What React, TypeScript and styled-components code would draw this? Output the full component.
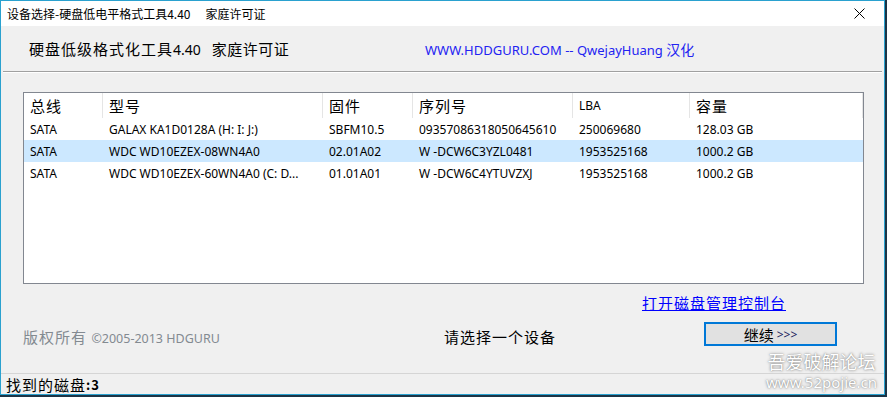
import styled, { createGlobalStyle } from 'styled-components';

const GlobalStyle = createGlobalStyle`
  html, body {
    margin: 0;
    padding: 0;
  }
  body {
    width: 887px;
    height: 397px;
    overflow: hidden;
    background: #1c3446;
    font-family: 'Noto Sans', 'Noto Sans CJK SC', sans-serif;
  }
`;

const cjk = `'Noto Sans CJK SC', 'Noto Sans', sans-serif`;

type Column = { title: string; width: number; latin?: boolean };

const columns: Column[] = [
  { title: '总线', width: 79 },
  { title: '型号', width: 220 },
  { title: '固件', width: 90 },
  { title: '序列号', width: 160 },
  { title: 'LBA', width: 117, latin: true },
  { title: '容量', width: 173 },
];

const drives = [
  ['SATA', 'GALAX KA1D0128A (H: I: J:)', 'SBFM10.5', '09357086318050645610', '250069680', '128.03 GB'],
  ['SATA', 'WDC WD10EZEX-08WN4A0', '02.01A02', 'W -DCW6C3YZL0481', '1953525168', '1000.2 GB'],
  ['SATA', 'WDC WD10EZEX-60WN4A0 (C: D...', '01.01A01', 'W -DCW6C4YTUVZXJ', '1953525168', '1000.2 GB'],
];

const gridCols = columns.map((c) => `${c.width}px`).join(' ');

export default function App() {
  return (
    <>
      <GlobalStyle />
      <Window>
        <TitleBar>
          <TitleText>
            设备选择-硬盘低电平格式工具4.40<TitleGap>家庭许可证</TitleGap>
          </TitleText>
          <CloseButton>
            <svg width="11" height="11" viewBox="0 0 11 11">
              <path d="M0.5 0.5 L10.5 10.5 M10.5 0.5 L0.5 10.5" stroke="#000" strokeWidth="1" fill="none" />
            </svg>
          </CloseButton>
        </TitleBar>

        <Client>
          <Header>
            <AppTitle>
              硬盘低级格式化工具<Version>4.40</Version>
              <License>家庭许可证</License>
            </AppTitle>
            <Credits>
              WWW.HDDGURU.COM -- QwejayHuang <CreditsCjk>汉化</CreditsCjk>
            </Credits>
          </Header>
          <Divider />

          <ListBox>
            <ListHeader>
              {columns.map((c) => (
                <HeaderCell key={c.title} $latin={c.latin}>
                  {c.title}
                </HeaderCell>
              ))}
            </ListHeader>
            {drives.map((d, i) => (
              <ListRow key={i} $selected={i === 1}>
                {d.map((v, j) => (
                  <Cell key={j}>{v}</Cell>
                ))}
              </ListRow>
            ))}
          </ListBox>

          <LinkRow>
            <DiskLink>打开磁盘管理控制台</DiskLink>
          </LinkRow>

          <ActionRow>
            <Copyright>
              版权所有 <CopyrightLatin>©2005-2013 HDGURU</CopyrightLatin>
            </Copyright>
            <Prompt>请选择一个设备</Prompt>
            <ContinueButton>
              继续 <Arrows>&gt;&gt;&gt;</Arrows>
            </ContinueButton>
          </ActionRow>

          <StatusBar>
            找到的磁盘<StatusCount>:3</StatusCount>
          </StatusBar>
        </Client>

        <Watermark>
          <WatermarkCn>吾爱破解论坛</WatermarkCn>
          <WatermarkUrl>www.52pojie.cn</WatermarkUrl>
        </Watermark>
      </Window>
    </>
  );
}

const Window = styled.div`
  position: relative;
  box-sizing: border-box;
  width: 885px;
  height: 395px;
  border: 1px solid #2aa1cf;
  display: flex;
  flex-direction: column;
  background: #f0f0f0;
`;

const TitleBar = styled.div`
  height: 25px;
  background: #ffffff;
  display: flex;
  align-items: center;
  padding-left: 6px;
`;

const TitleText = styled.div`
  font-family: ${cjk};
  font-size: 12px;
  color: #000;
  white-space: nowrap;
  flex: 1;
`;

const TitleGap = styled.span`
  margin-left: 15px;
`;

const CloseButton = styled.div`
  width: 46px;
  height: 25px;
  display: flex;
  align-items: center;
  justify-content: center;
  margin-right: 2px;
`;

const Client = styled.div`
  flex: 1;
  display: flex;
  flex-direction: column;
  background: #f0f0f0;
`;

const Header = styled.div`
  height: 45px;
  display: flex;
  align-items: center;
  padding-left: 28px;
`;

const AppTitle = styled.div`
  width: 396px;
  font-family: ${cjk};
  font-size: 15px;
  letter-spacing: 1px;
  color: #000;
  white-space: nowrap;
`;

const Version = styled.span`
  font-family: 'Noto Sans', sans-serif;
  font-size: 14px;
  letter-spacing: 0;
`;

const License = styled.span`
  margin-left: 11px;
  letter-spacing: 0.5px;
`;

const Credits = styled.div`
  font-family: 'Noto Sans', sans-serif;
  font-size: 13px;
  color: #2323f2;
  white-space: nowrap;
`;

const CreditsCjk = styled.span`
  font-family: ${cjk};
  font-size: 14px;
`;

const Divider = styled.div`
  margin: 0 2px;
  border-top: 1px solid #a0a0a0;
  border-bottom: 1px solid #ffffff;
`;

const ListBox = styled.div`
  box-sizing: border-box;
  margin: 19px 0 0 22px;
  width: 841px;
  height: 192px;
  border: 1px solid #828790;
  background: #ffffff;
`;

const ListHeader = styled.div`
  display: grid;
  grid-template-columns: ${gridCols};
  height: 25px;
`;

const HeaderCell = styled.div<{ $latin?: boolean }>`
  border-right: 1px solid #e5e5e5;
  padding-left: 6px;
  display: flex;
  align-items: center;
  font-family: ${({ $latin }) => ($latin ? `'Noto Sans', sans-serif` : cjk)};
  font-size: ${({ $latin }) => ($latin ? '12px' : '15px')};
  letter-spacing: ${({ $latin }) => ($latin ? '0' : '1px')};
  color: #000;
`;

const ListRow = styled.div<{ $selected?: boolean }>`
  display: grid;
  grid-template-columns: ${gridCols};
  height: 22px;
  background: ${({ $selected }) => ($selected ? '#cce8ff' : 'transparent')};
`;

const Cell = styled.div`
  padding-left: 6px;
  display: flex;
  align-items: center;
  font-family: 'Noto Sans', sans-serif;
  font-size: 12px;
  color: #000;
  white-space: nowrap;
  overflow: hidden;
`;

const LinkRow = styled.div`
  height: 36px;
  display: flex;
  align-items: center;
  justify-content: flex-end;
  padding-right: 98px;
`;

const DiskLink = styled.a`
  font-family: ${cjk};
  font-size: 15px;
  letter-spacing: 1px;
  color: #0000ff;
  text-decoration: underline;
  cursor: pointer;
`;

const ActionRow = styled.div`
  display: flex;
  align-items: flex-start;
  padding: 2px 0 0 22px;
  height: 30px;
`;

const Copyright = styled.div`
  width: 421px;
  margin-top: 5px;
  font-family: ${cjk};
  font-size: 15px;
  letter-spacing: 1px;
  color: #838a91;
  line-height: 20px;
`;

const CopyrightLatin = styled.span`
  font-family: 'Noto Sans', sans-serif;
  font-size: 12.5px;
  letter-spacing: 0;
`;

const Prompt = styled.div`
  width: 260px;
  margin-top: 5px;
  font-family: ${cjk};
  font-size: 15px;
  letter-spacing: 1px;
  color: #000;
  line-height: 20px;
`;

const ContinueButton = styled.button`
  box-sizing: border-box;
  width: 133px;
  height: 24px;
  border: 2px solid #0078d7;
  background: #e1e1e1;
  font-family: ${cjk};
  font-size: 15px;
  color: #000;
  padding: 0;
  display: flex;
  align-items: center;
  justify-content: center;
  gap: 3px;
`;

const Arrows = styled.span`
  font-family: 'Noto Sans', sans-serif;
  font-size: 12px;
  color: #1a1a5a;
`;

const StatusBar = styled.div`
  margin-top: auto;
  height: 20px;
  border-top: 1px solid #d5d5d5;
  display: flex;
  align-items: center;
  padding-left: 5px;
  font-family: ${cjk};
  font-size: 15px;
  letter-spacing: 1px;
  color: #000;
`;

const StatusCount = styled.span`
  font-weight: bold;
  font-size: 13px;
`;

const Watermark = styled.div`
  position: absolute;
  right: 7px;
  bottom: 2px;
  display: flex;
  flex-direction: column;
  align-items: center;
  color: #ffffff;
  text-shadow: 0 0 3px rgba(0, 0, 0, 0.45), 0 0 1px rgba(0, 0, 0, 0.3);
  pointer-events: none;
`;

const WatermarkCn = styled.div`
  font-family: ${cjk};
  font-size: 18px;
  line-height: 22px;
`;

const WatermarkUrl = styled.div`
  font-family: 'Noto Sans', sans-serif;
  font-size: 15px;
  line-height: 20px;
`;
